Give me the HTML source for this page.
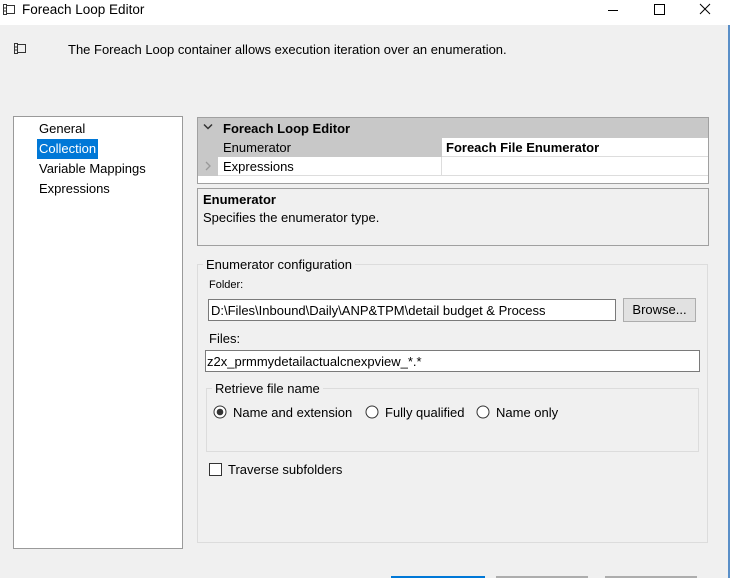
<!DOCTYPE html>
<html><head><style>
body{margin:0;width:730px;height:578px;background:#f0f0f0;font-family:"Liberation Sans","Noto Sans CJK SC",sans-serif;font-size:13px;color:#000;position:relative;overflow:hidden}
.a{position:absolute}
.t{white-space:nowrap}
</style></head><body>
<div class="a" style="left:0;top:0;width:730px;height:25px;background:#fff"></div>
<svg class="a" style="left:2px;top:3px" width="14" height="13"><path d="M1.5 1.5h3v10h-3zM4.5 2.5h8v8h-8M1.5 5h3M1.5 8h3" stroke="#333" fill="none"/></svg>
<div class="a t" style="left:22px;top:2px;font-size:13.5px">Foreach Loop Editor</div>
<div class="a" style="left:608px;top:10px;width:10px;height:1px;background:#000"></div>
<div class="a" style="left:654px;top:4px;width:9px;height:9px;border:1px solid #000"></div>
<svg class="a" style="left:699px;top:3px" width="12" height="12"><path d="M1 1L11 11M11 1L1 11" stroke="#000"/></svg>
<div class="a" style="left:728px;top:25px;width:2px;height:553px;background:#5a8fc8"></div>
<svg class="a" style="left:13px;top:42px" width="14" height="13"><path d="M1.5 1.5h3v10h-3zM4.5 2.5h8v8h-8M1.5 5h3M1.5 8h3" stroke="#333" fill="none"/></svg>
<div class="a t" style="left:68px;top:42px">The Foreach Loop container allows execution iteration over an enumeration.</div>

<div class="a" style="left:13px;top:116px;width:168px;height:431px;background:#fff;border:1px solid #9a9a9a"></div>
<div class="a t" style="left:39px;top:121px">General</div>
<div class="a t" style="left:37px;top:139px;background:#0078d7;color:#fff;padding:1px 2px;height:18px;line-height:18px">Collection</div>
<div class="a t" style="left:39px;top:161px">Variable Mappings</div>
<div class="a t" style="left:39px;top:181px">Expressions</div>

<div class="a" style="left:197px;top:117px;width:512px;height:67px;background:#fff;border:1px solid #a0a0a0;box-sizing:border-box"></div>
<div class="a" style="left:198px;top:118px;width:510px;height:20px;background:#c8c8c8"></div>
<div class="a" style="left:198px;top:138px;width:20px;height:38px;background:#c8c8c8"></div>
<div class="a" style="left:218px;top:138px;width:224px;height:19px;background:#c8c8c8"></div>
<div class="a" style="left:442px;top:138px;width:266px;height:18px;border-bottom:1px solid #ddd"></div>
<div class="a" style="left:218px;top:157px;width:490px;height:18px;border-bottom:1px solid #ddd"></div>
<div class="a" style="left:441px;top:157px;width:1px;height:18px;background:#ddd"></div>
<svg class="a" style="left:203px;top:123px" width="10" height="8"><path d="M1 1.5L5 5.5L9 1.5" stroke="#333" stroke-width="1.5" fill="none"/></svg>
<svg class="a" style="left:204px;top:161px" width="8" height="10"><path d="M2 1L6 5L2 9" stroke="#999" stroke-width="1.3" fill="none"/></svg>
<div class="a t" style="left:223px;top:121px;font-weight:bold">Foreach Loop Editor</div>
<div class="a t" style="left:223px;top:140px">Enumerator</div>
<div class="a t" style="left:446px;top:140px;font-weight:bold">Foreach File Enumerator</div>
<div class="a t" style="left:223px;top:159px">Expressions</div>

<div class="a" style="left:197px;top:188px;width:512px;height:58px;border:1px solid #a0a0a0;box-sizing:border-box"></div>
<div class="a t" style="left:203px;top:192px;font-weight:bold">Enumerator</div>
<div class="a t" style="left:203px;top:210px">Specifies the enumerator type.</div>

<div class="a" style="left:197px;top:264px;width:511px;height:279px;border:1px solid #dcdcdc;box-sizing:border-box"></div>
<div class="a t" style="left:203px;top:257px;background:#f0f0f0;padding:0 3px">Enumerator configuration</div>
<div class="a t" style="left:209px;top:279px;font-size:11px">Folder:</div>
<div class="a" style="left:208px;top:299px;width:408px;height:22px;background:#fff;border:1px solid #7a7a7a;box-sizing:border-box"></div>
<div class="a t" style="left:211px;top:303px">D:\Files\Inbound\Daily\ANP&amp;TPM\detail budget &amp; Process</div>
<div class="a" style="left:623px;top:298px;width:73px;height:24px;background:#e1e1e1;border:1px solid #adadad;box-sizing:border-box;text-align:center;line-height:22px">Browse...</div>
<div class="a t" style="left:209px;top:331px">Files:</div>
<div class="a" style="left:205px;top:350px;width:495px;height:22px;background:#fff;border:1px solid #7a7a7a;box-sizing:border-box"></div>
<div class="a t" style="left:207px;top:354px">z2x_prmmydetailactualcnexpview_*.*</div>
<div class="a" style="left:206px;top:388px;width:493px;height:64px;border:1px solid #dcdcdc;box-sizing:border-box"></div>
<div class="a t" style="left:212px;top:381px;background:#f0f0f0;padding:0 3px">Retrieve file name</div>
<svg class="a" style="left:213px;top:405px" width="14" height="14"><circle cx="7" cy="7" r="6" fill="#fff" stroke="#333"/><circle cx="7" cy="7" r="3.3" fill="#333"/></svg>
<div class="a t" style="left:233px;top:405px">Name and extension</div>
<svg class="a" style="left:365px;top:405px" width="14" height="14"><circle cx="7" cy="7" r="6" fill="#fff" stroke="#333"/></svg>
<div class="a t" style="left:385px;top:405px">Fully qualified</div>
<svg class="a" style="left:476px;top:405px" width="14" height="14"><circle cx="7" cy="7" r="6" fill="#fff" stroke="#333"/></svg>
<div class="a t" style="left:496px;top:405px">Name only</div>
<div class="a" style="left:209px;top:463px;width:13px;height:13px;background:#fff;border:1px solid #333;box-sizing:border-box"></div>
<div class="a t" style="left:228px;top:462px">Traverse subfolders</div>

<div class="a" style="left:391px;top:576px;width:94px;height:2px;background:#0078d7"></div>
<div class="a" style="left:496px;top:576px;width:92px;height:2px;background:#adadad"></div>
<div class="a" style="left:605px;top:576px;width:92px;height:2px;background:#adadad"></div>
</body></html>
